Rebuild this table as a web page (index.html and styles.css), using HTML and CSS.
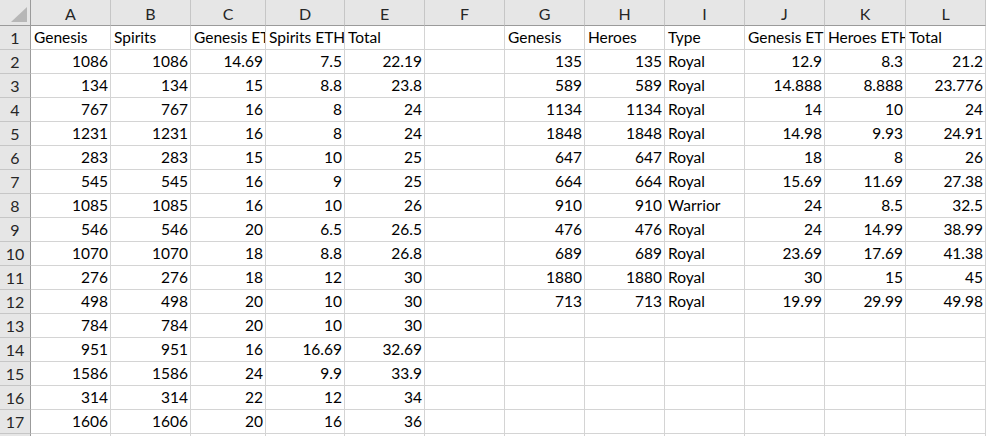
FILE: index.html
```html
<!DOCTYPE html>
<html>
<head>
<meta charset="utf-8">
<link rel="stylesheet" href="styles.css">
</head>
<body>
<div class="sheet">
  <div class="corner"><span class="tri"></span></div>
  <div class="ch">A</div><div class="ch">B</div><div class="ch">C</div><div class="ch">D</div><div class="ch">E</div><div class="ch">F</div><div class="ch">G</div><div class="ch">H</div><div class="ch">I</div><div class="ch">J</div><div class="ch">K</div><div class="ch">L</div>

  <div class="rh">1</div><div class="c">Genesis</div><div class="c">Spirits</div><div class="c">Genesis ETH</div><div class="c">Spirits ETH</div><div class="c">Total</div><div class="c"></div><div class="c">Genesis</div><div class="c">Heroes</div><div class="c">Type</div><div class="c">Genesis ETH</div><div class="c">Heroes ETH</div><div class="c">Total</div>

  <div class="rh">2</div><div class="c n">1086</div><div class="c n">1086</div><div class="c n">14.69</div><div class="c n">7.5</div><div class="c n">22.19</div><div class="c"></div><div class="c n">135</div><div class="c n">135</div><div class="c">Royal</div><div class="c n">12.9</div><div class="c n">8.3</div><div class="c n">21.2</div>

  <div class="rh">3</div><div class="c n">134</div><div class="c n">134</div><div class="c n">15</div><div class="c n">8.8</div><div class="c n">23.8</div><div class="c"></div><div class="c n">589</div><div class="c n">589</div><div class="c">Royal</div><div class="c n">14.888</div><div class="c n">8.888</div><div class="c n">23.776</div>

  <div class="rh">4</div><div class="c n">767</div><div class="c n">767</div><div class="c n">16</div><div class="c n">8</div><div class="c n">24</div><div class="c"></div><div class="c n">1134</div><div class="c n">1134</div><div class="c">Royal</div><div class="c n">14</div><div class="c n">10</div><div class="c n">24</div>

  <div class="rh">5</div><div class="c n">1231</div><div class="c n">1231</div><div class="c n">16</div><div class="c n">8</div><div class="c n">24</div><div class="c"></div><div class="c n">1848</div><div class="c n">1848</div><div class="c">Royal</div><div class="c n">14.98</div><div class="c n">9.93</div><div class="c n">24.91</div>

  <div class="rh">6</div><div class="c n">283</div><div class="c n">283</div><div class="c n">15</div><div class="c n">10</div><div class="c n">25</div><div class="c"></div><div class="c n">647</div><div class="c n">647</div><div class="c">Royal</div><div class="c n">18</div><div class="c n">8</div><div class="c n">26</div>

  <div class="rh">7</div><div class="c n">545</div><div class="c n">545</div><div class="c n">16</div><div class="c n">9</div><div class="c n">25</div><div class="c"></div><div class="c n">664</div><div class="c n">664</div><div class="c">Royal</div><div class="c n">15.69</div><div class="c n">11.69</div><div class="c n">27.38</div>

  <div class="rh">8</div><div class="c n">1085</div><div class="c n">1085</div><div class="c n">16</div><div class="c n">10</div><div class="c n">26</div><div class="c"></div><div class="c n">910</div><div class="c n">910</div><div class="c">Warrior</div><div class="c n">24</div><div class="c n">8.5</div><div class="c n">32.5</div>

  <div class="rh">9</div><div class="c n">546</div><div class="c n">546</div><div class="c n">20</div><div class="c n">6.5</div><div class="c n">26.5</div><div class="c"></div><div class="c n">476</div><div class="c n">476</div><div class="c">Royal</div><div class="c n">24</div><div class="c n">14.99</div><div class="c n">38.99</div>

  <div class="rh">10</div><div class="c n">1070</div><div class="c n">1070</div><div class="c n">18</div><div class="c n">8.8</div><div class="c n">26.8</div><div class="c"></div><div class="c n">689</div><div class="c n">689</div><div class="c">Royal</div><div class="c n">23.69</div><div class="c n">17.69</div><div class="c n">41.38</div>

  <div class="rh">11</div><div class="c n">276</div><div class="c n">276</div><div class="c n">18</div><div class="c n">12</div><div class="c n">30</div><div class="c"></div><div class="c n">1880</div><div class="c n">1880</div><div class="c">Royal</div><div class="c n">30</div><div class="c n">15</div><div class="c n">45</div>

  <div class="rh">12</div><div class="c n">498</div><div class="c n">498</div><div class="c n">20</div><div class="c n">10</div><div class="c n">30</div><div class="c"></div><div class="c n">713</div><div class="c n">713</div><div class="c">Royal</div><div class="c n">19.99</div><div class="c n">29.99</div><div class="c n">49.98</div>

  <div class="rh">13</div><div class="c n">784</div><div class="c n">784</div><div class="c n">20</div><div class="c n">10</div><div class="c n">30</div><div class="c"></div><div class="c"></div><div class="c"></div><div class="c"></div><div class="c"></div><div class="c"></div><div class="c"></div>

  <div class="rh">14</div><div class="c n">951</div><div class="c n">951</div><div class="c n">16</div><div class="c n">16.69</div><div class="c n">32.69</div><div class="c"></div><div class="c"></div><div class="c"></div><div class="c"></div><div class="c"></div><div class="c"></div><div class="c"></div>

  <div class="rh">15</div><div class="c n">1586</div><div class="c n">1586</div><div class="c n">24</div><div class="c n">9.9</div><div class="c n">33.9</div><div class="c"></div><div class="c"></div><div class="c"></div><div class="c"></div><div class="c"></div><div class="c"></div><div class="c"></div>

  <div class="rh">16</div><div class="c n">314</div><div class="c n">314</div><div class="c n">22</div><div class="c n">12</div><div class="c n">34</div><div class="c"></div><div class="c"></div><div class="c"></div><div class="c"></div><div class="c"></div><div class="c"></div><div class="c"></div>

  <div class="rh">17</div><div class="c n">1606</div><div class="c n">1606</div><div class="c n">20</div><div class="c n">16</div><div class="c n">36</div><div class="c"></div><div class="c"></div><div class="c"></div><div class="c"></div><div class="c"></div><div class="c"></div><div class="c"></div>

  <div class="rh"></div><div class="c"></div><div class="c"></div><div class="c"></div><div class="c"></div><div class="c"></div><div class="c"></div><div class="c"></div><div class="c"></div><div class="c"></div><div class="c"></div><div class="c"></div><div class="c"></div>
</div>
</body>
</html>
```

FILE: styles.css
```css
html, body {
  margin: 0;
  padding: 0;
  background: #ffffff;
  overflow: hidden;
}

.sheet {
  display: grid;
  grid-template-columns: 31px 80px 80px 75px 79px 80px 80px 80px 80px 80px 80px 81px 80px;
  grid-template-rows: 26px;
  grid-auto-rows: 24px;
  width: 986px;
  height: 436px;
  overflow: hidden;
  font-family: Lato, "Open Sans", sans-serif;
  font-size: 15.5px;
  color: #000000;
}

.sheet > div {
  box-sizing: border-box;
  overflow: hidden;
  white-space: nowrap;
}

.corner {
  position: relative;
  background: #e6e6e6;
  border-right: 1px solid #9b9b9b;
  border-bottom: 1px solid #9b9b9b;
}

.tri {
  position: absolute;
  right: 3px;
  bottom: 3px;
  width: 0;
  height: 0;
  border-left: 16px solid transparent;
  border-bottom: 15px solid #b7b7b7;
}

.ch {
  background: #e6e6e6;
  border-right: 1px solid #c6c6c6;
  border-bottom: 1px solid #9b9b9b;
  display: flex;
  align-items: center;
  justify-content: center;
  color: #262626;
  font-size: 16px;
  padding-top: 1px;
}

.rh {
  background: #e6e6e6;
  border-right: 1px solid #9b9b9b;
  border-bottom: 1px solid #c6c6c6;
  display: flex;
  align-items: center;
  justify-content: center;
  color: #262626;
  font-size: 16px;
}

.c {
  border-right: 1px solid #d4d4d4;
  border-bottom: 1px solid #d4d4d4;
  display: flex;
  align-items: flex-end;
  justify-content: flex-start;
  padding: 0 2px 3px 3px;
  line-height: 18px;
}

.n {
  justify-content: flex-end;
}
```
